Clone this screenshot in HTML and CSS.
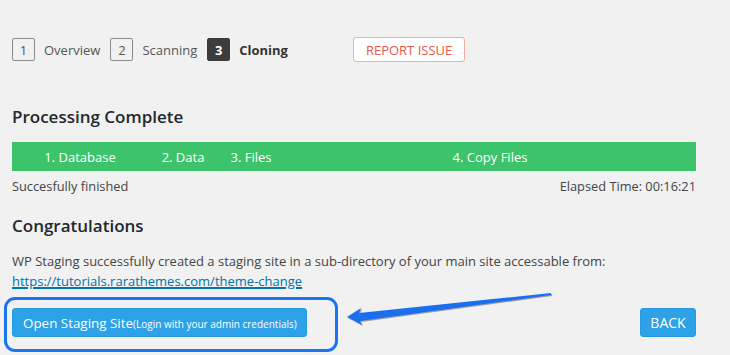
FILE: index.html
```html
<!DOCTYPE html>
<html lang="en">
<head>
    <meta charset="UTF-8">
    <title>WP Staging - Cloning</title>
    <link rel="stylesheet" href="styles.css">
</head>
<body>
    <div class="container">
        <div class="steps">
            <span class="step-num">1</span>
            <span class="step-label">Overview</span>
            <span class="step-num">2</span>
            <span class="step-label">Scanning</span>
            <span class="step-num current">3</span>
            <span class="step-label current">Cloning</span>
            <button class="report-btn">REPORT ISSUE</button>
        </div>

        <h2 class="title processing">Processing Complete</h2>

        <div class="progress">
            <div class="segment seg-db">1. Database</div>
            <div class="segment seg-data">2. Data</div>
            <div class="segment seg-files">3. Files</div>
            <div class="segment seg-copy">4. Copy Files</div>
        </div>

        <div class="status">
            <span>Succesfully finished</span>
            <span>Elapsed Time: 00:16:21</span>
        </div>

        <h2 class="title congrats">Congratulations</h2>

        <p class="message">
            WP Staging successfully created a staging site in a sub-directory of your main site accessable from:<br>
            <a href="#">https://tutorials.rarathemes.com/theme-change</a>
        </p>

        <div class="actions">
            <button class="btn open-btn">Open Staging Site<small>(Login with your admin credentials)</small></button>
            <button class="btn back-btn">BACK</button>

            <!-- annotation: outline + arrow -->
            <div class="highlight"></div>
            <svg class="arrow" width="220" height="40" viewBox="0 0 220 40">
                <polygon points="1,26 15,17 13,22 205,2 205,4 14,30 16,34" fill="#1a6fef" />
            </svg>
        </div>
    </div>
</body>
</html>
```

FILE: styles.css
```css
* {
    margin: 0;
    padding: 0;
    box-sizing: border-box;
}

html, body {
    height: 100%;
}

body {
    font-family: 'Open Sans', 'Noto Sans', sans-serif;
    background: #f1f1f1;
    color: #444;
}

.container {
    min-height: 100%;
    padding: 37px 34px 20px 12px;
}

.steps {
    display: flex;
    align-items: center;
    height: 25px;
}

.step-num {
    width: 23px;
    height: 23px;
    border: 1px solid #8c8c8c;
    border-radius: 2px;
    display: flex;
    align-items: center;
    justify-content: center;
    font-size: 13px;
    color: #555;
}

.step-num.current {
    background: #3c3c3c;
    border-color: #3c3c3c;
    color: #fff;
    font-weight: 700;
}

.step-label {
    font-size: 13px;
    color: #555;
    margin: 0 10px 0 9px;
}

.step-label.current {
    color: #333;
    font-weight: 700;
    margin-right: 0;
}

.report-btn {
    margin-left: 65px;
    height: 25px;
    padding: 0 12px;
    border: 1px solid #f7aba3;
    border-radius: 3px;
    background: #fff;
    color: #e9574b;
    font-family: inherit;
    font-size: 13px;
}

.title {
    font-size: 17px;
    font-weight: 600;
    color: #23282d;
}

.processing {
    margin-top: 43px;
}

.progress {
    display: flex;
    height: 29px;
    margin-top: 14px;
    background: #3cc36b;
    color: #fff;
    font-size: 13px;
}

.segment {
    display: flex;
    align-items: center;
    justify-content: center;
}

.seg-db { width: 136px; }
.seg-data { width: 70px; }
.seg-files { width: 66px; }
.seg-copy { flex: 1; }

.status {
    display: flex;
    justify-content: space-between;
    margin-top: 6px;
    font-size: 12.8px;
}

.congrats {
    margin-top: 19px;
}

.message {
    margin-top: 14px;
    font-size: 13px;
    line-height: 20px;
}

.message a {
    color: #0073aa;
    text-decoration-thickness: 1.5px;
}

.actions {
    position: relative;
    display: flex;
    justify-content: space-between;
    align-items: center;
    margin-top: 17px;
}

.btn {
    height: 29px;
    border: 1px solid #239ae0;
    border-radius: 3px;
    background: #2ea2e8;
    color: #fff;
    font-family: inherit;
    white-space: nowrap;
}

.open-btn {
    width: 295px;
    padding: 0 10px;
    text-align: left;
    font-size: 13.4px;
}

.open-btn small {
    font-size: 10px;
}

.back-btn {
    width: 56px;
    font-size: 14px;
}

.highlight {
    position: absolute;
    left: -8px;
    top: -11px;
    width: 334px;
    height: 55px;
    border: 3px solid #1a73f0;
    border-radius: 11px;
}

.arrow {
    position: absolute;
    left: 334px;
    top: -17px;
    filter: drop-shadow(1px 1px 0.5px rgba(0, 0, 0, 0.35));
}
```
